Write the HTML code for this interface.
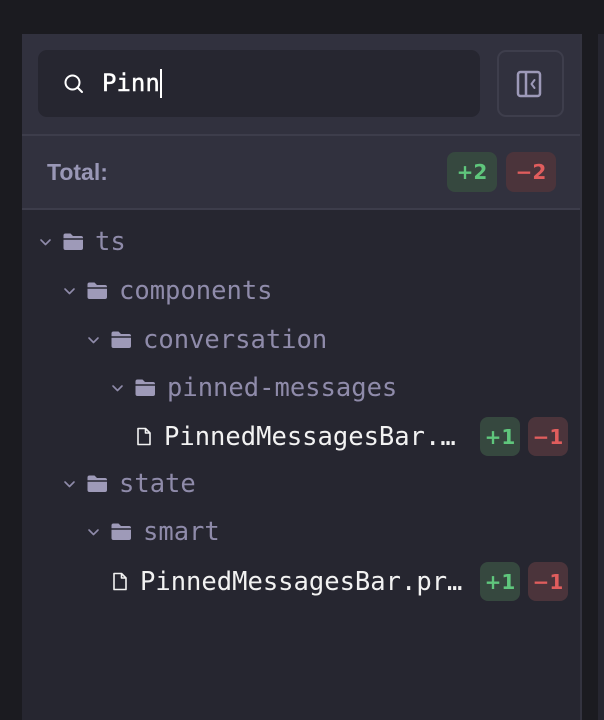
<!DOCTYPE html>
<html><head><meta charset="utf-8"><style>
*{margin:0;padding:0;box-sizing:border-box}
body{width:604px;height:720px;background:#1b1b20;position:relative;overflow:hidden;font-family:"DejaVu Sans Mono","Liberation Mono",monospace}
.panel{position:absolute;left:22px;top:34px;width:560px;height:686px;background:#262630;border-right:2px solid #33333f}
.head{position:absolute;left:0;top:0;width:558px;height:176px;background:#31313e}
.search{position:absolute;left:16px;top:16px;width:442px;height:67px;border-radius:9px;background:#262630}
.btn{position:absolute;left:475px;top:16px;width:67px;height:67px;border-radius:9px;border:2px solid #3e3e4c}
.div1{position:absolute;left:0;top:100px;width:558px;height:2px;background:#3d3d4b}
.div2{position:absolute;left:0;top:174px;width:558px;height:2px;background:#3d3d4b}
.total{position:absolute;left:25px;top:125px;font:bold 23px "Liberation Sans","DejaVu Sans",sans-serif;color:#9997b6}
.b{position:absolute;height:40px;border-radius:8px;font:bold 20px "DejaVu Sans","Liberation Sans",sans-serif;text-align:center;line-height:40px}
.g{background:#36483f;color:#5fc67c}.r{background:#4b343b;color:#e05d5d}
.row{position:absolute;height:40px;line-height:40px;font-size:25.5px;white-space:nowrap}
.f{color:#8f8baa}.fl{color:#f2f2f2}
svg{position:absolute}
.sidebar{position:absolute;left:598px;top:34px;width:6px;height:686px;background:#262630}
</style></head><body>
<div class="panel">
 <div class="head"></div>
 <div class="search">
  <svg style="left:25px;top:23px" width="22" height="22" viewBox="0 0 22 22"><circle cx="9.5" cy="9.5" r="7" fill="none" stroke="#fff" stroke-width="2"/><path d="M14.5 14.5L19 19" stroke="#fff" stroke-width="2" stroke-linecap="round"/></svg>
  <div style="position:absolute;left:64px;top:14px;font-size:24px;color:#fff;line-height:38px;-webkit-text-stroke:0.4px #fff">Pinn</div>
  <div style="position:absolute;left:122px;top:19px;width:2px;height:29px;background:#fff"></div>
 </div>
 <div class="btn">
  <svg style="left:17px;top:18px" width="28" height="28" viewBox="0 0 28 28"><rect x="2" y="2" width="22" height="24" rx="2.5" fill="none" stroke="#9d99b8" stroke-width="2.5"/><path d="M10 2v24" stroke="#9d99b8" stroke-width="2.5"/><path d="M18.5 10l-3 4 3 4" fill="none" stroke="#9d99b8" stroke-width="2" stroke-linecap="round" stroke-linejoin="round"/></svg>
 </div>
 <div class="div1"></div>
 <div class="total">Total:</div>
 <div class="b g" style="left:425px;top:118px;width:50px">+2</div>
 <div class="b r" style="left:484px;top:118px;width:50px">−2</div>
 <div class="div2"></div>
</div>
<div class="sidebar"></div>

<svg width="604" height="720" style="left:0;top:0">
<defs>
<g id="ch"><path d="M0 0l4.5 4.5L9 0" fill="none" stroke="#8f8baa" stroke-width="1.6" stroke-linecap="round" stroke-linejoin="round"/></g>
<g id="fd"><path d="M1.5 3.5a2 2 0 0 1 2-2h5l2.5 2.5h8a2 2 0 0 1 2 2v10a2 2 0 0 1-2 2h-15.5a2 2 0 0 1-2-2z" fill="#9e9ab8"/><path d="M1.5 7h20" stroke="#262630" stroke-width="1.4"/></g>
<g id="fi"><path d="M2 1.5h7.5l4.5 4.5v11.5h-12z M9.5 1.5v4.5h4.5" fill="none" stroke="#f2f2f2" stroke-width="1.6" stroke-linejoin="round"/></g>
</defs>
<use href="#ch" x="41" y="240"/><use href="#fd" x="62" y="232"/>
<use href="#ch" x="65" y="289"/><use href="#fd" x="86" y="281"/>
<use href="#ch" x="89" y="338"/><use href="#fd" x="110" y="330"/>
<use href="#ch" x="113" y="386"/><use href="#fd" x="134" y="378"/>
<use href="#fi" x="136" y="427"/>
<use href="#ch" x="65" y="482"/><use href="#fd" x="86" y="474"/>
<use href="#ch" x="89" y="530"/><use href="#fd" x="110" y="522"/>
<use href="#fi" x="112" y="572"/>
</svg>

<div class="row f" style="left:95px;top:222px">ts</div>
<div class="row f" style="left:119px;top:271px">components</div>
<div class="row f" style="left:143px;top:320px">conversation</div>
<div class="row f" style="left:167px;top:368px">pinned-messages</div>
<div class="row fl" style="left:164px;top:417px">PinnedMessagesBar.…</div>
<div class="b g" style="left:480px;top:417px;width:40px;height:39px">+1</div>
<div class="b r" style="left:528px;top:417px;width:40px;height:39px">−1</div>
<div class="row f" style="left:119px;top:464px">state</div>
<div class="row f" style="left:143px;top:512px">smart</div>
<div class="row fl" style="left:140px;top:562px">PinnedMessagesBar.pr…</div>
<div class="b g" style="left:480px;top:562px;width:40px;height:39px">+1</div>
<div class="b r" style="left:528px;top:562px;width:40px;height:39px">−1</div>
</body></html>
